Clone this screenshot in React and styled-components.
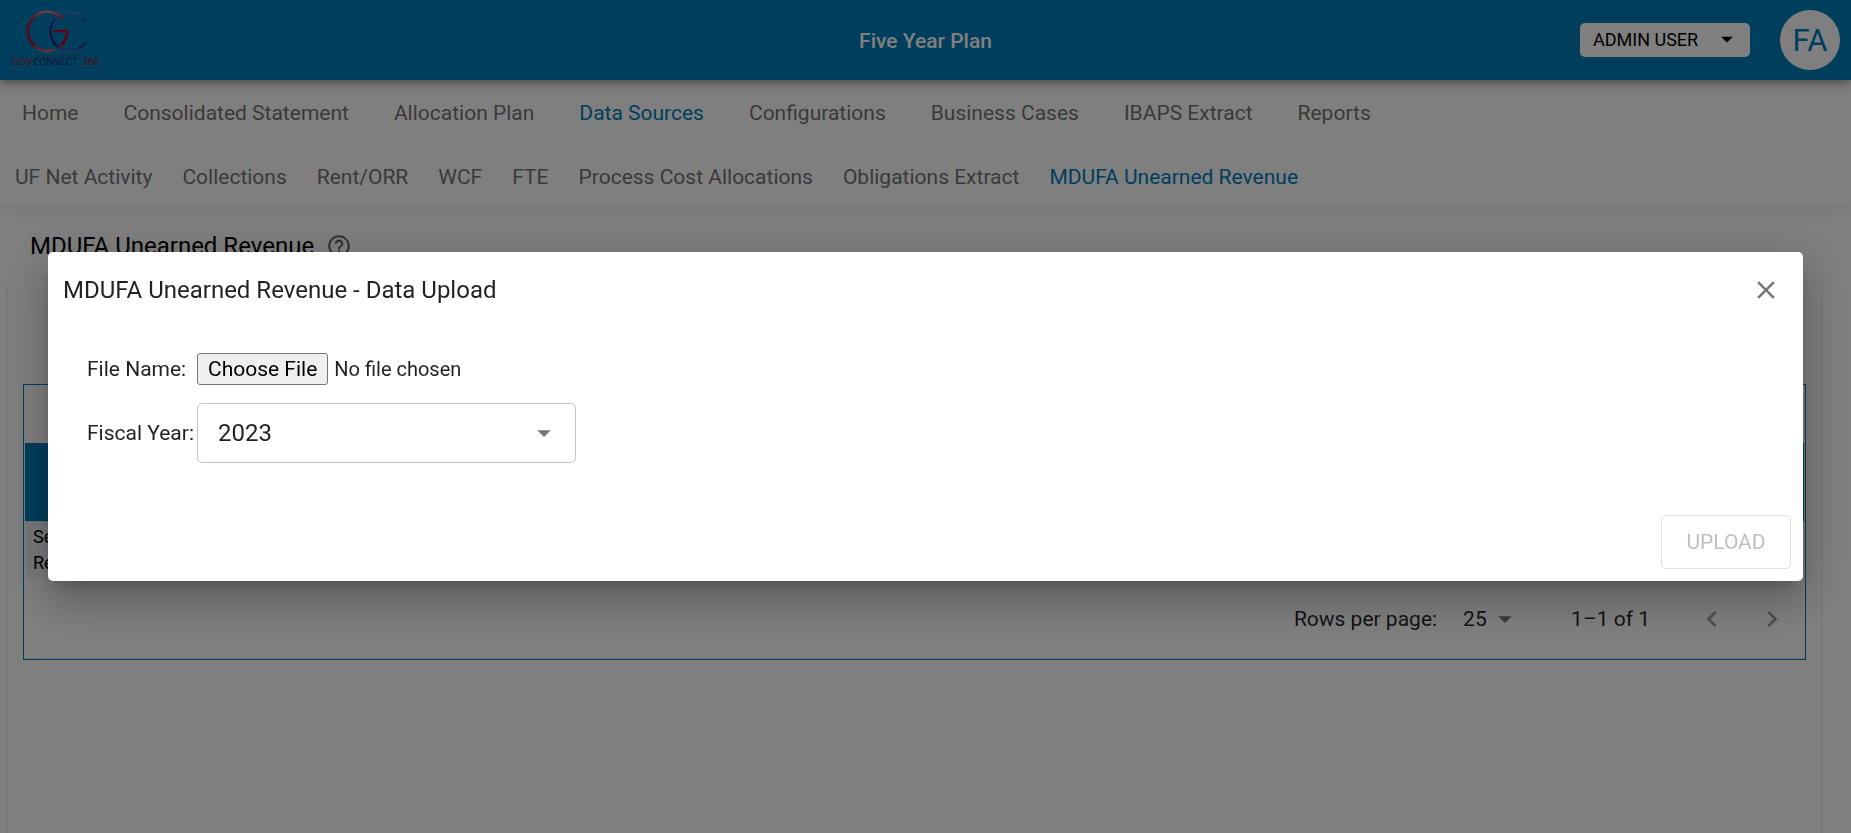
import React from "react";
import styled, { createGlobalStyle } from "styled-components";

const BLUE = "#007cba";

const GlobalStyle = createGlobalStyle`
  *, *::before, *::after { box-sizing: border-box; }
  html, body, #root { height: 100%; }
  body {
    margin: 0;
    overflow: hidden;
    background: #fff;
    color: #000;
    font-family: Roboto, "Liberation Sans", sans-serif;
    font-size: 21px;
  }
  button, input, select { font-family: inherit; }
`;

const Page = styled.div`
  height: 100%;
  display: flex;
  flex-direction: column;
`;

const Header = styled.header`
  position: relative;
  z-index: 3;
  flex: none;
  height: 80px;
  padding: 0 11px;
  display: grid;
  grid-template-columns: 1fr auto 1fr;
  align-items: center;
  background: ${BLUE};
  color: #fff;
  box-shadow: 0 3px 5px -1px rgba(0, 0, 0, 0.2), 0 6px 10px rgba(0, 0, 0, 0.14),
    0 1px 18px rgba(0, 0, 0, 0.12);
`;

const Logo = styled.svg`
  display: block;
  width: 92px;
  height: 60px;
  font-family: "DejaVu Sans", sans-serif;
  font-size: 9px;
`;

const AppName = styled.h1`
  margin: 0;
  padding-top: 2px;
  font-size: 21px;
  font-weight: 500;
`;

const UserArea = styled.div`
  display: flex;
  justify-content: flex-end;
  align-items: center;
  gap: 30px;
`;

const RoleButton = styled.button`
  width: 170px;
  height: 34px;
  padding: 0 9px 2px 13px;
  display: flex;
  align-items: center;
  justify-content: space-between;
  border: 0;
  border-radius: 5px;
  background: #fff;
  color: #000;
  font-size: 18px;
`;

const Avatar = styled.div`
  width: 60px;
  height: 60px;
  display: grid;
  place-items: center;
  border-radius: 50%;
  background: #fff;
  color: ${BLUE};
  font-size: 31px;
`;

const NavBar = styled.nav`
  position: relative;
  z-index: ${(p) => (p.$sub ? 1 : 2)};
  flex: none;
  height: ${(p) => (p.$sub ? 58 : 66)}px;
  padding: ${(p) => (p.$sub ? "4px 15px 0" : "0 22px")};
  display: flex;
  align-items: center;
  gap: ${(p) => (p.$sub ? 30 : 45)}px;
  background: #fff;
  box-shadow: ${(p) =>
    p.$sub ? "0 4px 20px rgba(0, 0, 0, 0.07)" : "0 2px 4px rgba(0, 0, 0, 0.02)"};
`;

const NavLink = styled.a`
  color: ${(p) => (p.$active ? BLUE : "#757575")};
  text-decoration: none;
  white-space: nowrap;
`;

const Main = styled.main`
  flex: 1;
  min-height: 0;
  padding: 24px 30px 0 8px;
  display: flex;
  flex-direction: column;
`;

const PageTitle = styled.h2`
  flex: none;
  height: 36px;
  margin: 0 0 15px;
  padding-left: 22px;
  display: flex;
  align-items: center;
  gap: 12px;
  font-size: 24px;
  font-weight: 400;
  color: #000;
`;

const Card = styled.section`
  flex: 1;
  padding: 105px 15px 0;
  border-radius: 8px 8px 0 0;
  box-shadow: 0 1px 3px rgba(0, 0, 0, 0.22);
`;

const Grid = styled.div`
  border: 1px solid ${BLUE};
`;

const GridToolbar = styled.div`
  height: 58px;
`;

const Table = styled.table`
  width: 100%;
  padding: 0 1px;
  border-collapse: separate;
  border-spacing: 0;
`;

const HeadCell = styled.th`
  height: 78px;
  padding: 0;
  background: ${BLUE};
`;

const Cell = styled.td`
  height: 58px;
  padding: 0 8px 2px;
  background: #f0f3f6;
  border-top: 1px solid #e0e0e0;
  font-size: 18px;
  line-height: 26px;
`;

const Pagination = styled.div`
  height: 80px;
  padding: 0 3px;
  display: flex;
  justify-content: flex-end;
  align-items: center;
  border-bottom: 1px solid #e0e0e0;
  color: rgba(0, 0, 0, 0.87);
`;

const PageSize = styled.label`
  display: flex;
  align-items: center;
  gap: 26px;
`;

const SelectWrap = styled.span`
  display: grid;
  align-items: center;
  width: ${(p) => p.$width};
  svg {
    grid-area: 1 / 1;
    justify-self: end;
    margin-right: ${(p) => (p.$boxed ? 16 : 0)}px;
    color: #757575;
    pointer-events: none;
  }
`;

const Select = styled.select`
  grid-area: 1 / 1;
  width: 100%;
  height: ${(p) => (p.$boxed ? 60 : 32)}px;
  padding: ${(p) => (p.$boxed ? "0 52px 0 20px" : "0")};
  appearance: none;
  border: ${(p) => (p.$boxed ? "1px solid #c4c4c4" : "0")};
  border-radius: 5px;
  background: transparent;
  color: rgba(0, 0, 0, 0.87);
  font-size: ${(p) => (p.$boxed ? 24 : 21)}px;
`;

const Range = styled.span`
  margin: 0 32px 0 50px;
`;

const IconButton = styled.button`
  width: ${(p) => p.$size}px;
  height: ${(p) => p.$size}px;
  padding: 0;
  display: grid;
  place-items: center;
  border: 0;
  background: none;
  color: ${(p) => p.$color};
`;

const Backdrop = styled.div`
  position: fixed;
  inset: 0;
  z-index: 10;
  padding: 48px;
  display: flex;
  align-items: center;
  background: rgba(0, 0, 0, 0.5);
`;

const Dialog = styled.section`
  width: 100%;
  border-radius: 5px;
  background: #fff;
  color: rgba(0, 0, 0, 0.87);
  box-shadow: 0 11px 15px -7px rgba(0, 0, 0, 0.2), 0 24px 38px 3px rgba(0, 0, 0, 0.14),
    0 9px 46px 8px rgba(0, 0, 0, 0.12);
`;

const DialogHead = styled.header`
  height: 76px;
  padding: 0 16px 0 15px;
  display: flex;
  align-items: center;
  justify-content: space-between;
`;

const DialogTitle = styled.h2`
  margin: 0;
  font-size: 24px;
  font-weight: 400;
`;

const Form = styled.form`
  padding: 25px 39px 0;
  display: grid;
  grid-template-columns: 110px 1fr;
  row-gap: 18px;
  align-items: center;
`;

const FileInput = styled.input`
  height: 32px;
  font-size: 20px;
  color: inherit;
  &::file-selector-button {
    height: 32px;
    padding: 0 10px;
    margin-right: 6px;
    border: 1px solid #767676;
    border-radius: 3px;
    background: #efefef;
    color: #000;
    font-family: inherit;
    font-size: 21px;
  }
`;

const DialogActions = styled.footer`
  padding: 52px 12px 12px;
  display: flex;
  justify-content: flex-end;
`;

const UploadButton = styled.button`
  width: 130px;
  height: 54px;
  border: 1px solid rgba(0, 0, 0, 0.12);
  border-radius: 5px;
  background: none;
  color: rgba(0, 0, 0, 0.26);
  font-size: 21px;
`;

const Icon = ({ d, size }) => (
  <svg width={size} height={size} viewBox="0 0 24 24" fill="currentColor" aria-hidden="true">
    <path d={d} />
  </svg>
);

const ARROW = "M7 10l5 5 5-5z";
const CLOSE =
  "M19 6.41L17.59 5 12 10.59 6.41 5 5 6.41 10.59 12 5 17.59 6.41 19 12 13.41 17.59 19 19 17.59 13.41 12z";
const LEFT = "M15.41 16.59L10.83 12l4.58-4.59L14 6l-6 6 6 6z";
const RIGHT = "M8.59 16.59L13.17 12 8.59 7.41 10 6l6 6-6 6z";
const HELP =
  "M11 18h2v-2h-2v2zm1-16C6.48 2 2 6.48 2 12s4.48 10 10 10 10-4.48 10-10S17.52 2 12 2zm0 18c-4.41 0-8-3.59-8-8s3.59-8 8-8 8 3.59 8 8-3.59 8-8 8zm0-14c-2.21 0-4 1.79-4 4h2c0-1.1.9-2 2-2s2 .9 2 2c0 2-3 1.75-3 5h2c0-2.25 3-2.5 3-5 0-2.21-1.79-4-4-4z";

const sections = [
  "Home",
  "Consolidated Statement",
  "Allocation Plan",
  "Data Sources",
  "Configurations",
  "Business Cases",
  "IBAPS Extract",
  "Reports",
];

const sources = [
  "UF Net Activity",
  "Collections",
  "Rent/ORR",
  "WCF",
  "FTE",
  "Process Cost Allocations",
  "Obligations Extract",
  "MDUFA Unearned Revenue",
];

function Nav({ items, active, sub, label }) {
  return (
    <NavBar $sub={sub} aria-label={label}>
      {items.map((item) => (
        <NavLink key={item} href="#" $active={item === active}>
          {item}
        </NavLink>
      ))}
    </NavBar>
  );
}

function BrandLogo() {
  return (
    <Logo viewBox="0 0 92 60" role="img" aria-label="GovConnect 360">
      <defs>
        <linearGradient id="red" gradientUnits="userSpaceOnUse" x1="0" y1="1" x2="0" y2="42">
          <stop offset="0" stopColor="#e08090" />
          <stop offset="0.2" stopColor="#c81030" />
          <stop offset="0.8" stopColor="#b80824" />
          <stop offset="1" stopColor="#d86878" />
        </linearGradient>
        <linearGradient id="navy" gradientUnits="userSpaceOnUse" x1="0" y1="1" x2="0" y2="42">
          <stop offset="0" stopColor="#4a80d8" />
          <stop offset="0.3" stopColor="#103c90" />
          <stop offset="0.8" stopColor="#0a2c70" />
          <stop offset="1" stopColor="#4070c0" />
        </linearGradient>
      </defs>
      <g fill="none" strokeWidth="2.6">
        <path
          d="M75 11Q69 2.500 58 2.200Q53 2.300 49 5M44.500 8.500A19.200 19.200 0 0 0 58 40.800Q69 40.500 75 32.500"
          stroke="url(#navy)"
        />
        <path
          d="M51.500 9A19.500 19.500 0 1 0 43.500 39.500M42 21H56Q56 31 48.500 37"
          stroke="url(#red)"
        />
      </g>
      <path d="M19 46h53" stroke="#1a6a90" strokeWidth="2" />
      <text x="1" y="55" fill="#b0102c">GOV</text>
      <text x="22" y="55" fill="#06306c">CONNECT</text>
      <text x="71" y="55" fill="#b0102c">360</text>
    </Logo>
  );
}

export default function App() {
  return (
    <>
      <GlobalStyle />
      <Page>
        <Header>
          <BrandLogo />
          <AppName>Five Year Plan</AppName>
          <UserArea>
            <RoleButton type="button">
              ADMIN USER
              <Icon d={ARROW} size={28} />
            </RoleButton>
            <Avatar>FA</Avatar>
          </UserArea>
        </Header>
        <Nav items={sections} active="Data Sources" label="Sections" />
        <Nav items={sources} active="MDUFA Unearned Revenue" label="Data sources" sub />
        <Main>
          <PageTitle>
            MDUFA Unearned Revenue
            <IconButton type="button" aria-label="Help" $size={26} $color="#666">
              <Icon d={HELP} size={26} />
            </IconButton>
          </PageTitle>
          <Card>
            <Grid>
              <GridToolbar />
              <Table>
                <thead>
                  <tr>
                    <HeadCell />
                  </tr>
                </thead>
                <tbody>
                  <tr>
                    <Cell>
                      Se
                      <br />
                      Re
                    </Cell>
                  </tr>
                </tbody>
              </Table>
              <Pagination>
                <PageSize>
                  Rows per page:
                  <SelectWrap $width="58px">
                    <Select defaultValue="25">
                      <option>25</option>
                    </Select>
                    <Icon d={ARROW} size={32} />
                  </SelectWrap>
                </PageSize>
                <Range>1–1 of 1</Range>
                <IconButton type="button" aria-label="Previous page" disabled $size={60} $color="#9e9e9e">
                  <Icon d={LEFT} size={32} />
                </IconButton>
                <IconButton type="button" aria-label="Next page" disabled $size={60} $color="#9e9e9e">
                  <Icon d={RIGHT} size={32} />
                </IconButton>
              </Pagination>
            </Grid>
          </Card>
        </Main>
      </Page>
      <Backdrop>
        <Dialog role="dialog" aria-modal="true" aria-labelledby="upload-title">
          <DialogHead>
            <DialogTitle id="upload-title">MDUFA Unearned Revenue - Data Upload</DialogTitle>
            <IconButton type="button" aria-label="Close" $size={42} $color="#757575">
              <Icon d={CLOSE} size={30} />
            </IconButton>
          </DialogHead>
          <Form>
            <label htmlFor="file">File Name:</label>
            <FileInput id="file" type="file" />
            <label htmlFor="year">Fiscal Year:</label>
            <SelectWrap $width="379px" $boxed>
              <Select id="year" defaultValue="2023" $boxed>
                <option>2023</option>
              </Select>
              <Icon d={ARROW} size={32} />
            </SelectWrap>
          </Form>
          <DialogActions>
            <UploadButton type="button" disabled>
              UPLOAD
            </UploadButton>
          </DialogActions>
        </Dialog>
      </Backdrop>
    </>
  );
}
